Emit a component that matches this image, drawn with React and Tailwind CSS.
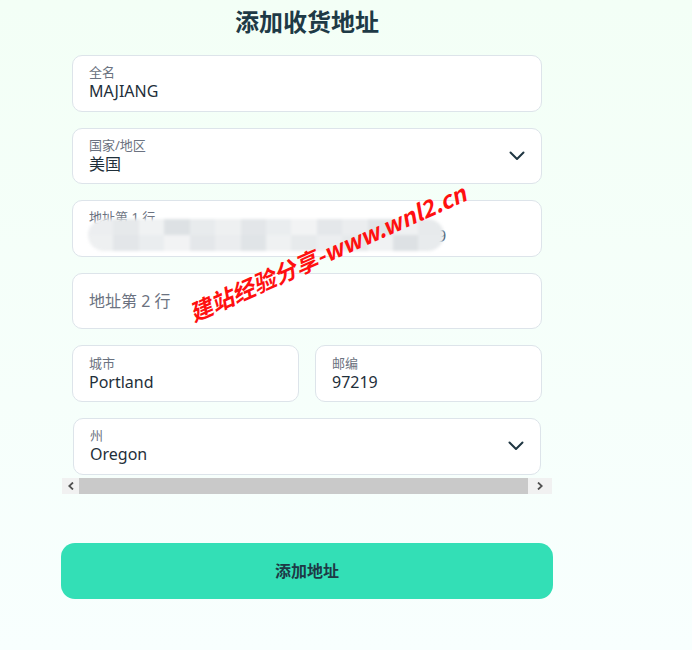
import React from "react";

const font = { fontFamily: '"Noto Sans", "Noto Sans CJK SC", sans-serif' };

function Chevron() {
  return (
    <svg width="16" height="10" viewBox="0 0 16 10" fill="none" className="shrink-0">
      <path d="M1.5 1.5 L8 8 L14.5 1.5" stroke="#1f3642" strokeWidth="2" strokeLinecap="round" strokeLinejoin="round" />
    </svg>
  );
}

function Field({ label, value, select, className = "" }) {
  return (
    <div className={"h-[56.6px] rounded-[10px] border border-[#dde4ea] bg-white pl-4 pr-[16px] flex items-center " + className}>
      <div className="flex-1 flex flex-col justify-center">
        <div className="text-[13px] leading-[16px] text-[#6b7280]">{label}</div>
        <div className="text-[16px] leading-[22px] text-[#1f2f3a]">{value}</div>
      </div>
      {select && <Chevron />}
    </div>
  );
}

export default function App() {
  const blocks = ["#eceef0", "#e6e9eb", "#f0f2f3", "#dde1e4", "#e8ebed", "#eef0f1", "#e3e6e9", "#eaedef", "#f2f3f4", "#e4e7ea", "#ebedef", "#e0e4e7", "#eff1f2", "#e7eaec"];
  return (
    <div style={font} className="relative min-h-[650px] w-[692px] overflow-hidden bg-gradient-to-b from-[#f3fff6] to-[#f8fffe]">
      <div className="ml-[62px] w-[490px]">
        <h1 className="h-[44px] flex items-center justify-center text-[24px] font-bold text-[#1e3a46]">添加收货地址</h1>
        <div className="mt-[11px] px-[10px] flex flex-col gap-[16px]">
          <Field label="全名" value="MAJIANG" />
          <Field label="国家/地区" value="美国" select />
          <div className="relative">
            <Field label="地址第 1 行" value={<span className="pl-[348px]">9</span>} />
            <div className="absolute left-[16px] top-[19px] w-[356px] h-[32px] flex rounded-full overflow-hidden blur-[1.5px]">
              {blocks.map((c, i) => (
                <div key={i} className="flex-1 flex flex-col">
                  <div className="flex-1" style={{ background: c }} />
                  <div className="flex-1" style={{ background: blocks[(i + 5) % blocks.length] }} />
                </div>
              ))}
            </div>
          </div>
          <div className="h-[56.6px] rounded-[10px] border border-[#dde4ea] bg-white px-4 flex items-center text-[16px] text-[#6b7280]">地址第 2 行</div>
          <div className="flex gap-[16px]">
            <Field label="城市" value="Portland" className="flex-1" />
            <Field label="邮编" value="97219" className="flex-1" />
          </div>
          <Field label="州" value="Oregon" select className="mx-[1px]" />
        </div>
        <div className="mt-[3px] h-[16px] flex bg-[#f1f1f1]">
          <div className="w-[17px] flex items-center justify-center">
            <svg width="6" height="8" viewBox="0 0 6 8"><path d="M5 0.5 L1.2 4 L5 7.5" stroke="#505050" strokeWidth="1.8" fill="none" /></svg>
          </div>
          <div className="flex-1 bg-[#c9c9c9]" />
          <div className="w-[24px] flex items-center justify-center">
            <svg width="6" height="8" viewBox="0 0 6 8"><path d="M1 0.5 L4.8 4 L1 7.5" stroke="#505050" strokeWidth="1.8" fill="none" /></svg>
          </div>
        </div>
        <button className="mt-[49px] -ml-[1px] w-[492px] h-[56px] rounded-[14px] bg-[#33dfb6] text-[16px] font-bold text-[#1e3a46]">添加地址</button>
      </div>
      <div
        className="absolute left-[190px] top-[296px] text-[23px] font-bold italic text-[#ff1010] whitespace-nowrap origin-left"
        style={{ transform: "rotate(-24deg)", fontFamily: '"Noto Sans CJK SC", "Noto Sans", sans-serif' }}
      >
        建站经验分享-www.wnl2.cn
      </div>
    </div>
  );
}
